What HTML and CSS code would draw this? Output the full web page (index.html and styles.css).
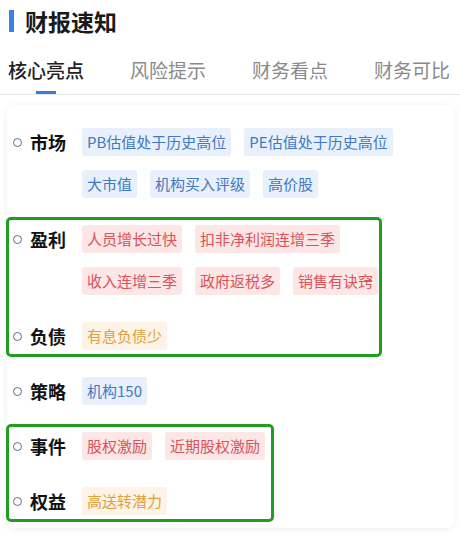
FILE: index.html
```html
<!DOCTYPE html>
<html lang="zh-CN">
<head>
    <meta charset="UTF-8">
    <meta name="viewport" content="width=device-width, initial-scale=1.0">
    <title>财报速知</title>
    <link rel="stylesheet" href="styles.css">
</head>
<body>
<div class="title">
    <span class="title-bar"></span>
    <span>财报速知</span>
</div>
<div class="tabs">
    <div class="tab active">核心亮点<span class="tab-line"></span></div>
    <div class="tab">风险提示</div>
    <div class="tab">财务看点</div>
    <div class="tab">财务可比</div>
</div>

<div class="card">
    <div class="item">
        <div class="item-head"><span class="dot"></span><span class="label">市场</span></div>
        <div class="tags">
            <span class="tag blue">PB估值处于历史高位</span>
            <span class="tag blue">PE估值处于历史高位</span>
            <span class="tag blue">大市值</span>
            <span class="tag blue">机构买入评级</span>
            <span class="tag blue">高价股</span>
        </div>
    </div>

    <div class="marked marked-wide">
        <div class="item">
            <div class="item-head"><span class="dot"></span><span class="label">盈利</span></div>
            <div class="tags">
                <span class="tag red">人员增长过快</span>
                <span class="tag red">扣非净利润连增三季</span>
                <span class="tag red">收入连增三季</span>
                <span class="tag red">政府返税多</span>
                <span class="tag red">销售有诀窍</span>
            </div>
        </div>
        <div class="item">
            <div class="item-head"><span class="dot"></span><span class="label">负债</span></div>
            <div class="tags">
                <span class="tag orange">有息负债少</span>
            </div>
        </div>
    </div>

    <div class="item">
        <div class="item-head"><span class="dot"></span><span class="label">策略</span></div>
        <div class="tags">
            <span class="tag blue">机构150</span>
        </div>
    </div>

    <div class="marked marked-narrow">
        <div class="item">
            <div class="item-head"><span class="dot"></span><span class="label">事件</span></div>
            <div class="tags">
                <span class="tag red">股权激励</span>
                <span class="tag red">近期股权激励</span>
            </div>
        </div>
        <div class="item">
            <div class="item-head"><span class="dot"></span><span class="label">权益</span></div>
            <div class="tags">
                <span class="tag orange">高送转潜力</span>
            </div>
        </div>
    </div>
</div>
</body>
</html>
```

FILE: styles.css
```css
body {
    margin: 0;
    background-color: white;
    font-family: "Noto Sans CJK SC", "Noto Sans", sans-serif;
    color: #1a1a1a;
}

.title {
    display: flex;
    align-items: center;
    gap: 11px;
    height: 26px;
    padding: 8px 0 0 9px;
    font-size: 23px;
    font-weight: bold;
    line-height: 26px;
}

.title-bar {
    width: 5px;
    height: 22px;
    background-color: #3b82e0;
}

.tabs {
    display: flex;
    align-items: flex-start;
    gap: 46px;
    padding: 24px 8px 0;
    border-bottom: 1px solid #e8e8e8;
}

.tab {
    display: flex;
    flex-direction: column;
    align-items: center;
    font-size: 19px;
    line-height: 24px;
    color: #8a8a8a;
}

.tab.active {
    color: #222;
    font-weight: 500;
}

.tab-line {
    width: 20px;
    height: 3px;
    margin-top: 9px;
    background-color: #3a7bd5;
}

.card {
    display: flex;
    flex-direction: column;
    gap: 27px;
    margin: 10px 6px 8px 7px;
    padding: 23px 0 13px;
    border-radius: 6px;
    background-color: white;
    box-shadow: 0 1px 6px rgba(0,0,0,0.07);
}

.marked {
    position: relative;
    display: flex;
    flex-direction: column;
    gap: 27px;
}

.marked::after {
    content: "";
    position: absolute;
    left: -1px;
    top: -8px;
    bottom: -7px;
    border: 3px solid #1f9e1f;
    border-radius: 5px;
}

.marked-wide::after {
    width: 370px;
}

.marked-narrow::after {
    width: 262px;
}

.item {
    display: flex;
    padding: 0 16px 0 6px;
}

.item-head {
    display: flex;
    align-items: center;
    flex-shrink: 0;
    width: 69px;
    height: 28px;
}

.dot {
    width: 7px;
    height: 7px;
    border: 1px solid #5b6b84;
    border-radius: 50%;
}

.label {
    margin-left: 8px;
    font-size: 18px;
    font-weight: bold;
    line-height: 28px;
    color: #111;
}

.tags {
    display: flex;
    flex-wrap: wrap;
    gap: 14px 13px;
}

.tag {
    height: 28px;
    padding: 0 5px;
    border-radius: 3px;
    font-size: 15px;
    line-height: 28px;
}

.blue {
    background-color: #e7f0fb;
    color: #4279c0;
}

.red {
    background-color: #fce6e6;
    color: #d9535a;
}

.orange {
    background-color: #fdf3e7;
    color: #e0a03e;
}
```
